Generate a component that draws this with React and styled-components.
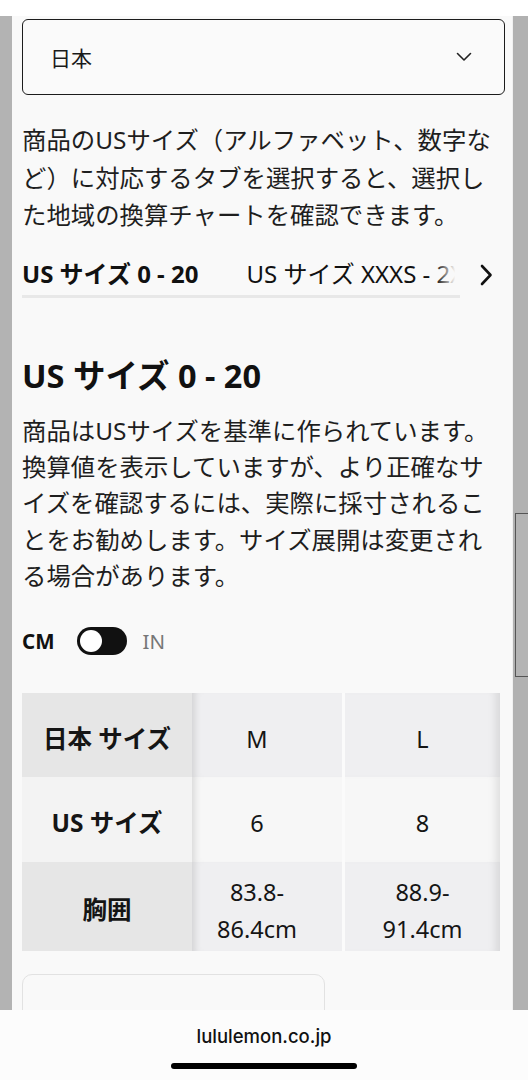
import React from 'react';
import styled, { createGlobalStyle } from 'styled-components';

const GlobalStyle = createGlobalStyle`
  html, body {
    margin: 0;
    padding: 0;
    background: #ffffff;
  }
  * {
    box-sizing: border-box;
  }
`;

const rows = [
  { label: '日本 サイズ', values: ['M', 'L'], tone: 'dark', height: 84 },
  { label: 'US サイズ', values: ['6', '8'], tone: 'light', height: 85 },
  { label: '胸囲', values: ['83.8-\n86.4cm', '88.9-\n91.4cm'], tone: 'dark', height: 89 },
];

const ChevronDown = () => (
  <svg width="16" height="10" viewBox="0 0 16 10" fill="none">
    <path d="M1.5 1.5 L8 8 L14.5 1.5" stroke="#222" strokeWidth="1.6" strokeLinecap="round" strokeLinejoin="round" />
  </svg>
);

const ChevronRight = () => (
  <svg width="14" height="22" viewBox="0 0 14 22" fill="none">
    <path d="M3 2 L11.5 11 L3 20" stroke="#111" strokeWidth="2.6" strokeLinecap="round" strokeLinejoin="round" />
  </svg>
);

const App = () => {
  return (
    <Page>
      <GlobalStyle />
      <TopBand />
      <Middle>
        <Rail />
        <Panel>
          <Select>
            <span>日本</span>
            <ChevronDown />
          </Select>

          <Intro>
            商品のUSサイズ（アルファベット、数字など）に対応するタブを選択すると、選択した地域の換算チャートを確認できます。
          </Intro>

          <TabRow>
            <TabTrack>
              <Tab active>US サイズ 0 - 20</Tab>
              <Tab>US サイズ XXXS - 2X</Tab>
              <Fade />
            </TabTrack>
            <TabArrow>
              <ChevronRight />
            </TabArrow>
          </TabRow>

          <Heading>US サイズ 0 - 20</Heading>
          <Body>
            商品はUSサイズを基準に作られています。換算値を表示していますが、より正確なサイズを確認するには、実際に採寸されることをお勧めします。サイズ展開は変更される場合があります。
          </Body>

          <UnitRow>
            <UnitLabel active>CM</UnitLabel>
            <Toggle>
              <Knob />
            </Toggle>
            <UnitLabel>IN</UnitLabel>
          </UnitRow>

          <Table>
            {rows.map((row) => (
              <Row key={row.label} h={row.height}>
                <HeadCell tone={row.tone}>{row.label}</HeadCell>
                {row.values.map((v, i) => (
                  <DataCell key={i} tone={row.tone} first={i === 0} last={i === row.values.length - 1}>
                    {v}
                  </DataCell>
                ))}
              </Row>
            ))}
          </Table>

          <NextCard />
        </Panel>
        <ScrollRail>
          <Thumb />
        </ScrollRail>
      </Middle>
      <BrowserBar>
        <Url>lululemon.co.jp</Url>
        <HomeIndicator />
      </BrowserBar>
    </Page>
  );
};

export default App;

const Page = styled.div`
  width: 528px;
  height: 1080px;
  display: flex;
  flex-direction: column;
  overflow: hidden;
  font-family: "Noto Sans", "Noto Sans CJK JP", sans-serif;
  color: #1a1a1a;
`;

const TopBand = styled.div`
  height: 16px;
  background: #ffffff;
  flex-shrink: 0;
`;

const Middle = styled.div`
  flex: 1;
  display: flex;
  min-height: 0;
`;

const Rail = styled.div`
  width: 12px;
  background: #b3b3b3;
  flex-shrink: 0;
`;

const ScrollRail = styled.div`
  width: 16px;
  background: #b1b1b1;
  flex-shrink: 0;
  padding-top: 497px;
  border-left: 1px solid #f0f0f0;
`;

const Thumb = styled.div`
  height: 164px;
  margin-left: 2px;
  border: 1.5px solid #555;
  border-right: none;
  background: #b4b4b4;
`;

const Panel = styled.div`
  flex: 1;
  background: #f9f9f9;
  padding: 3px 7px 0 10px;
  overflow: hidden;
  display: flex;
  flex-direction: column;
`;

const Select = styled.div`
  height: 76px;
  border: 1.6px solid #1c1c1c;
  border-radius: 6px;
  background: #fafafa;
  display: flex;
  align-items: center;
  justify-content: space-between;
  padding: 0 32px 0 27px;
  font-size: 21px;
  flex-shrink: 0;
`;

const Intro = styled.p`
  margin: 26px 0 0;
  font-size: 24.4px;
  line-height: 37.5px;
  color: #1e1e1e;
`;

const TabRow = styled.div`
  margin-top: 23px;
  display: flex;
  align-items: flex-start;
  flex-shrink: 0;
`;

const TabTrack = styled.div`
  position: relative;
  width: 438px;
  display: flex;
  gap: 48px;
  overflow: hidden;
  white-space: nowrap;
  border-bottom: 3px solid #e8e8e8;
`;

const Tab = styled.div`
  font-size: 24px;
  font-weight: ${(p) => (p.active ? 700 : 400)};
  color: #111;
  line-height: 34px;
  padding-bottom: 4px;
  margin-bottom: -3px;
  border-bottom: 3px solid ${(p) => (p.active ? '#c8102e' : 'transparent')};
  flex-shrink: 0;
`;

const Fade = styled.div`
  position: absolute;
  right: 0;
  top: 0;
  bottom: 0;
  width: 24px;
  background: linear-gradient(to right, rgba(249, 249, 249, 0), #f9f9f9 80%);
`;

const TabArrow = styled.div`
  margin-left: 19px;
  padding-top: 7px;
  display: flex;
`;

const Heading = styled.h2`
  margin: 57px 0 0;
  font-size: 32.5px;
  font-weight: 700;
  line-height: 42px;
  color: #111;
`;

const Body = styled.p`
  margin: 16px 0 0;
  font-size: 24.4px;
  line-height: 36.4px;
  color: #1e1e1e;
`;

const UnitRow = styled.div`
  margin-top: 32px;
  display: flex;
  align-items: center;
  height: 28px;
  flex-shrink: 0;
`;

const UnitLabel = styled.span`
  font-size: 20.5px;
  font-weight: ${(p) => (p.active ? 700 : 400)};
  color: ${(p) => (p.active ? '#111' : '#777')};
  & + div {
    margin-left: 22px;
  }
`;

const Toggle = styled.div`
  width: 50px;
  height: 28px;
  border-radius: 14px;
  background: #111;
  display: flex;
  align-items: center;
  padding-left: 3px;
  margin-right: 16px;
`;

const Knob = styled.div`
  width: 22px;
  height: 22px;
  border-radius: 50%;
  background: #fff;
`;

const Table = styled.div`
  margin-top: 38px;
  width: 478px;
  display: flex;
  flex-direction: column;
  flex-shrink: 0;
`;

const Row = styled.div`
  display: grid;
  grid-template-columns: 170px 150px 158px;
  height: ${(p) => p.h}px;
`;

const HeadCell = styled.div`
  background: ${(p) => (p.tone === 'dark' ? '#e6e6e6' : '#f3f3f3')};
  display: flex;
  align-items: center;
  justify-content: center;
  padding-top: 5px;
  font-size: 24.5px;
  font-weight: 700;
  color: #151515;
`;

const DataCell = styled.div`
  background: ${(p) => (p.tone === 'dark' ? '#efeff1' : '#f7f7f7')};
  display: flex;
  align-items: center;
  justify-content: center;
  text-align: center;
  white-space: pre-line;
  font-size: 23.5px;
  line-height: 37px;
  color: #151515;
  padding-top: 9px;
  padding-right: ${(p) => (p.first ? '20px' : '0')};
  border-left: ${(p) => (p.first ? 'none' : '3px solid #fbfbfb')};
  box-shadow: ${(p) =>
    p.first
      ? 'inset 8px 0 7px -5px rgba(0, 0, 0, 0.12)'
      : p.last
      ? 'inset -10px 0 8px -6px rgba(0, 0, 0, 0.1)'
      : 'none'};
`;

const NextCard = styled.div`
  margin-top: 23px;
  width: 303px;
  height: 80px;
  border: 1.5px solid #e2e2e2;
  border-radius: 10px;
  flex-shrink: 0;
`;

const BrowserBar = styled.div`
  height: 70px;
  flex-shrink: 0;
  background: #fcfcfc;
  display: flex;
  flex-direction: column;
  align-items: center;
  padding-top: 15px;
`;

const Url = styled.div`
  font-family: Inter, "Liberation Sans", sans-serif;
  font-size: 18.5px;
  font-weight: 500;
  color: #111;
  line-height: 22px;
`;

const HomeIndicator = styled.div`
  margin-top: 16px;
  width: 186px;
  height: 6px;
  border-radius: 3px;
  background: #000;
`;
